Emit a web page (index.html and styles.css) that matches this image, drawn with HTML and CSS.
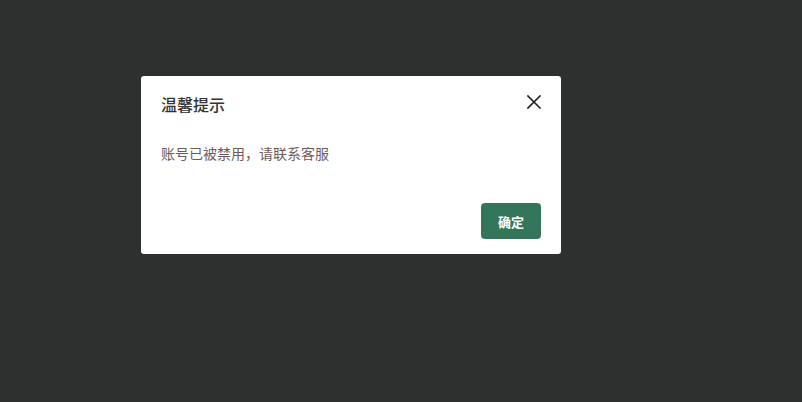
FILE: index.html
```html
<!DOCTYPE html>
<html lang="zh-CN">
<head>
<meta charset="utf-8">
<title>温馨提示</title>
<link rel="stylesheet" href="styles.css">
</head>
<body>
<div class="overlay">
  <div class="dialog">
    <div class="dialog-header">
      <span class="dialog-title">温馨提示</span>
      <button class="dialog-close" aria-label="关闭">
        <svg width="14" height="14" viewBox="0 0 14 14"><path d="M1 1L13 13M13 1L1 13" stroke="#1f1f1f" stroke-width="1.6" stroke-linecap="square"/></svg>
      </button>
    </div>
    <div class="dialog-body">账号已被禁用，请联系客服</div>
    <div class="dialog-footer">
      <button class="btn-primary">确定</button>
    </div>
  </div>
</div>
</body>
</html>
```
FILE: styles.css
```css
html, body {
  margin: 0;
  padding: 0;
  height: 100%;
}
body {
  background: #2e302f;
  font-family: "Noto Sans CJK SC", "Noto Sans", sans-serif;
}
.overlay {
  padding-top: 76px;
  padding-left: 141px;
}
.dialog {
  width: 420px;
  height: 178px;
  box-sizing: border-box;
  background: #ffffff;
  border-radius: 3px;
  padding: 16px 20px 15px 20px;
  display: flex;
  flex-direction: column;
}
.dialog-header {
  display: flex;
  align-items: center;
  justify-content: space-between;
  height: 24px;
}
.dialog-title {
  font-size: 16px;
  line-height: 24px;
  font-weight: 500;
  color: #333333;
}
.dialog-close {
  border: none;
  background: none;
  padding: 0;
  width: 14px;
  height: 14px;
  display: flex;
  margin-top: -4px;
}
.dialog-body {
  margin-top: 27px;
  font-size: 14px;
  line-height: 21px;
  color: #6e5a58;
}
.dialog-footer {
  margin-top: auto;
  display: flex;
  justify-content: flex-end;
}
.btn-primary {
  width: 60px;
  height: 36px;
  border: none;
  border-radius: 4px;
  background: #33765a;
  color: #ffffff;
  font-family: "Noto Sans CJK SC", sans-serif;
  font-size: 13px;
  font-weight: 600;
  padding: 0;
}
```
